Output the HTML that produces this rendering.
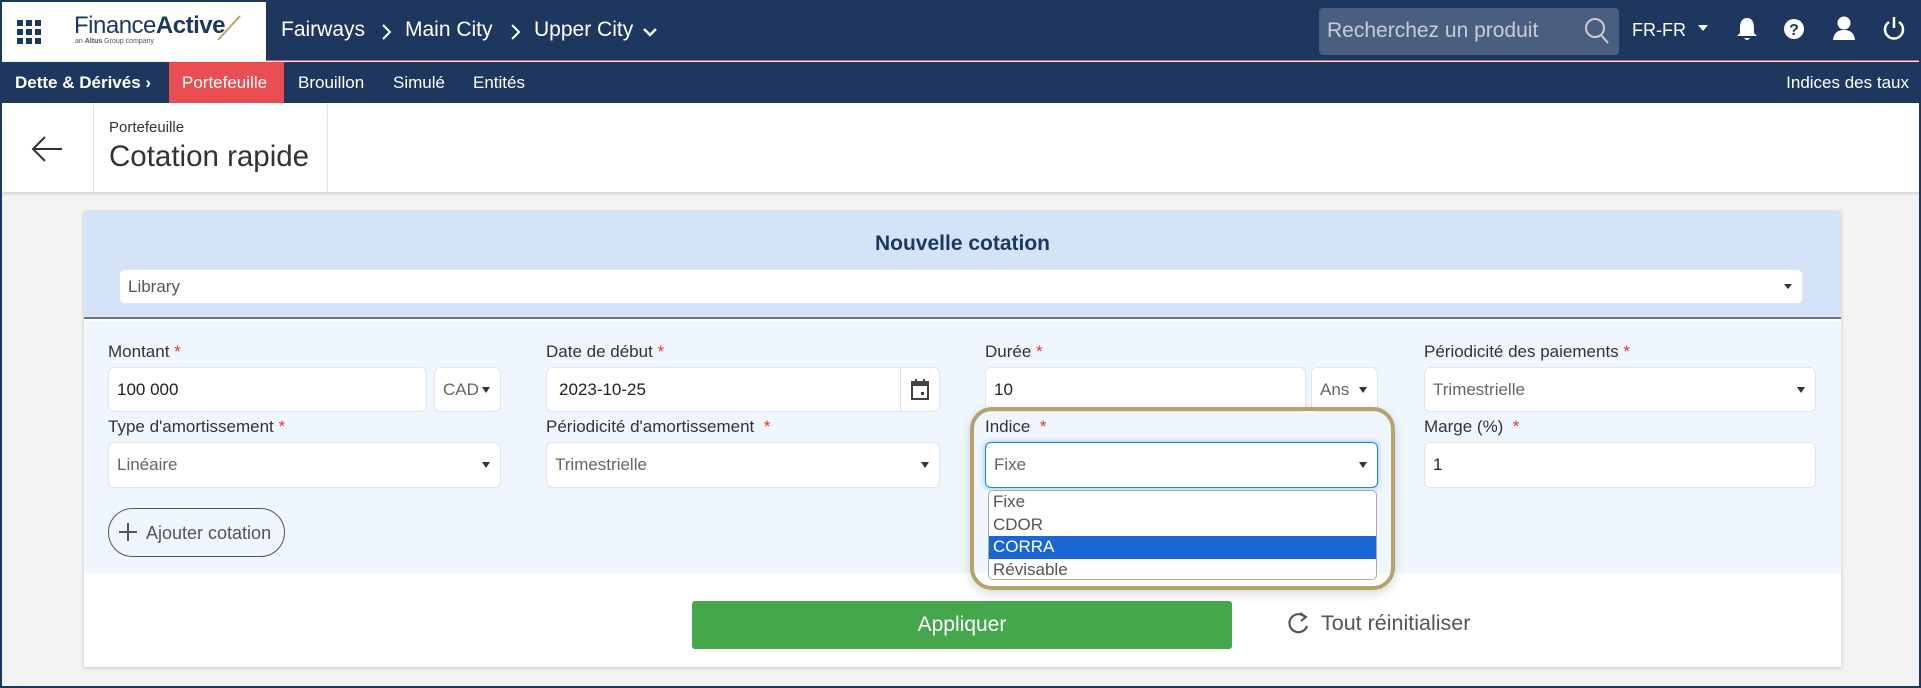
<!DOCTYPE html>
<html><head><meta charset="utf-8"><style>
*{box-sizing:border-box;margin:0;padding:0}
body{width:1921px;height:688px;overflow:hidden;background:#f3f3f3;font-family:"Liberation Sans",sans-serif;position:relative;color:#333}
.abs{position:absolute}
.top{left:0;top:0;width:1921px;height:61px;background:#1e375f;border-bottom:1px solid #e05c5c}
.sub{left:0;top:62px;width:1921px;height:41px;background:#1e375f;color:#fff;font-size:17px}
.sub span{position:absolute;top:11px}
.hdr{left:0;top:103px;width:1921px;height:89px;background:#fff;box-shadow:0 2px 3px rgba(0,0,0,.12)}
.card{left:84px;top:211px;width:1757px;height:456px;background:#fff;box-shadow:0 1px 4px rgba(0,0,0,.2)}
.lbl{font-size:17px;color:#333;white-space:nowrap}
.lbl b{color:#e33;font-weight:normal}
.inp{background:#fff;border:1px solid #e1e6ee;border-radius:6px;font-size:17px;color:#222;padding-left:8px;display:flex;align-items:center}
.sel{color:#666}
.car{position:absolute;right:10px;top:50%;margin-top:-3px;width:0;height:0;border-left:4px solid transparent;border-right:4px solid transparent;border-top:6px solid #333}
.bc{top:18px;font-size:21px;color:#fff;white-space:nowrap}
</style></head><body>
<div class="abs top"></div>
<div class="abs" style="left:2px;top:2px;width:264px;height:59px;background:#fff"></div>
<svg class="abs" style="left:17px;top:20px" width="26" height="24"><g fill="#1e375f">
<rect x="0" y="0" width="6" height="6"/><rect x="9" y="0" width="6" height="6"/><rect x="18" y="0" width="6" height="6"/>
<rect x="0" y="9" width="6" height="6"/><rect x="9" y="9" width="6" height="6"/><rect x="18" y="9" width="6" height="6"/>
<rect x="0" y="18" width="6" height="6"/><rect x="9" y="18" width="6" height="6"/><rect x="18" y="18" width="6" height="6"/></g></svg>
<div class="abs" style="left:74px;top:12px;font-size:24px;color:#1e375f;letter-spacing:-0.5px">Finance<b>Active</b></div>
<svg class="abs" style="left:216px;top:14px" width="26" height="28"><line x1="2" y1="26" x2="24" y2="2" stroke="#b5a36c" stroke-width="2"/></svg>
<div class="abs" style="left:75px;top:38px;font-size:7px;color:#555">an <b>Altus</b> Group company</div>
<div class="abs bc" style="left:281px">Fairways</div>
<svg class="abs" style="left:381px;top:23px" width="12" height="18"><path d="M2 2 L9 9 L2 16" stroke="#fff" stroke-width="2" fill="none"/></svg>
<div class="abs bc" style="left:405px">Main City</div>
<svg class="abs" style="left:510px;top:23px" width="12" height="18"><path d="M2 2 L9 9 L2 16" stroke="#fff" stroke-width="2" fill="none"/></svg>
<div class="abs bc" style="left:534px">Upper City</div>
<svg class="abs" style="left:642px;top:26px" width="16" height="12"><path d="M2 3 L8 9 L14 3" stroke="#fff" stroke-width="2.5" fill="none"/></svg>
<div class="abs" style="left:1319px;top:8px;width:300px;height:47px;background:#4a5f80;border-radius:4px"></div>
<div class="abs" style="left:1327px;top:19px;font-size:21px;color:#c8ccd4">Recherchez un produit</div>
<svg class="abs" style="left:1583px;top:16px" width="28" height="30"><circle cx="12" cy="12" r="9" stroke="#ccc" stroke-width="2" fill="none"/><line x1="18" y1="19" x2="25" y2="27" stroke="#ccc" stroke-width="2"/></svg>
<div class="abs" style="left:1632px;top:20px;font-size:18px;color:#fff">FR-FR</div>
<div class="abs" style="left:1698px;top:25px;border-left:5px solid transparent;border-right:5px solid transparent;border-top:6px solid #fff"></div>
<svg class="abs" style="left:1736px;top:16px" width="22" height="26"><path d="M11 2 C5 2 4 8 4 12 L4 17 L1 20 L21 20 L18 17 L18 12 C18 8 17 2 11 2Z M8 22 Q11 26 14 22Z" fill="#fff"/></svg>
<svg class="abs" style="left:1783px;top:18px" width="22" height="22"><circle cx="11" cy="11" r="10" fill="#fff"/><text x="11" y="17" font-size="16" font-weight="bold" text-anchor="middle" fill="#1e375f" font-family="Liberation Sans">?</text></svg>
<svg class="abs" style="left:1832px;top:15px" width="24" height="26"><circle cx="12" cy="8" r="6.5" fill="#fff"/><path d="M1 25 Q2 15 12 15 Q22 15 23 25Z" fill="#fff"/></svg>
<svg class="abs" style="left:1882px;top:15px" width="24" height="26"><path d="M7 7 A9 9 0 1 0 17 7" stroke="#fff" stroke-width="2.5" fill="none"/><line x1="12" y1="2" x2="12" y2="13" stroke="#fff" stroke-width="2.5"/></svg>

<div class="abs sub"><span style="left:15px;font-weight:bold">Dette &amp; Dérivés ›</span>
<div style="position:absolute;left:169px;top:0;width:115px;height:41px;background:#e84e52"></div>
<span style="left:182px">Portefeuille</span><span style="left:298px">Brouillon</span><span style="left:393px">Simulé</span><span style="left:473px">Entités</span>
<span style="right:12px">Indices des taux</span></div>

<div class="abs hdr"></div>
<div class="abs" style="left:93px;top:103px;width:1px;height:89px;background:#e5e5e5"></div>
<div class="abs" style="left:327px;top:103px;width:1px;height:89px;background:#e5e5e5"></div>
<svg class="abs" style="left:30px;top:134px" width="34" height="30"><path d="M32 15 H3 M15 3 L3 15 L15 27" stroke="#333" stroke-width="2" fill="none"/></svg>
<div class="abs" style="left:109px;top:119px;font-size:15px;color:#333">Portefeuille</div>
<div class="abs" style="left:109px;top:140px;font-size:29.5px;color:#333">Cotation rapide</div>

<div class="abs card"></div>
<div class="abs" style="left:84px;top:211px;width:1757px;height:108px;background:#d4e3f7;border-bottom:2px solid #6b7480"></div>
<div class="abs" style="left:84px;top:232px;width:1757px;text-align:center;font-size:21px;font-weight:bold;color:#1e375f">Nouvelle cotation</div>
<div class="abs inp sel" style="left:119px;top:269px;width:1684px;height:35px;color:#555">Library<div class="car" style="border-top-width:5px"></div></div>
<div class="abs" style="left:84px;top:321px;width:1757px;height:252px;background:#f0f6fe"></div>

<div class="abs lbl" style="left:108px;top:342px">Montant <b>*</b></div>
<div class="abs inp" style="left:108px;top:367px;width:319px;height:45px">100 000</div>
<div class="abs inp sel" style="left:434px;top:367px;width:67px;height:45px">CAD<div class="car"></div></div>
<div class="abs lbl" style="left:546px;top:342px">Date de début <b>*</b></div>
<div class="abs inp" style="left:546px;top:367px;width:394px;height:45px;padding-left:12px">2023-10-25</div>
<div class="abs" style="left:900px;top:368px;width:1px;height:43px;background:#ddd"></div>
<svg class="abs" style="left:910px;top:377px" width="20" height="24"><rect x="2" y="5" width="16" height="17" stroke="#444" stroke-width="2" fill="none"/><rect x="2" y="5" width="16" height="4" fill="#444"/><line x1="6" y1="2" x2="6" y2="7" stroke="#444" stroke-width="2"/><line x1="14" y1="2" x2="14" y2="7" stroke="#444" stroke-width="2"/><rect x="11" y="15" width="3" height="3" fill="#444"/></svg>
<div class="abs lbl" style="left:985px;top:342px">Durée <b>*</b></div>
<div class="abs inp" style="left:985px;top:367px;width:321px;height:45px">10</div>
<div class="abs inp sel" style="left:1311px;top:367px;width:67px;height:45px">Ans<div class="car"></div></div>
<div class="abs lbl" style="left:1424px;top:342px">Périodicité des paiements <b>*</b></div>
<div class="abs inp sel" style="left:1424px;top:367px;width:392px;height:45px">Trimestrielle<div class="car"></div></div>

<div class="abs lbl" style="left:108px;top:417px">Type d'amortissement <b>*</b></div>
<div class="abs inp sel" style="left:108px;top:442px;width:393px;height:46px">Linéaire<div class="car"></div></div>
<div class="abs lbl" style="left:546px;top:417px">Périodicité d'amortissement &nbsp;<b>*</b></div>
<div class="abs inp sel" style="left:546px;top:442px;width:394px;height:46px">Trimestrielle<div class="car"></div></div>
<div class="abs lbl" style="left:1424px;top:417px">Marge (%) &nbsp;<b>*</b></div>
<div class="abs inp" style="left:1424px;top:442px;width:392px;height:46px">1</div>

<div class="abs" style="left:970px;top:407px;width:425px;height:183px;border:4px solid #b5a36c;border-radius:22px;box-shadow:0 4px 10px rgba(0,0,0,.15)"></div>
<div class="abs lbl" style="left:985px;top:417px">Indice &nbsp;<b>*</b></div>
<div class="abs inp sel" style="left:985px;top:442px;width:393px;height:46px;border:1px solid #1a8ac4;box-shadow:0 0 6px rgba(26,138,196,.5)">Fixe<div class="car"></div></div>
<div class="abs" style="left:988px;top:490px;width:389px;height:90px;background:#fff;border:1px solid #aaa;border-radius:5px;font-size:17px;color:#555;line-height:22.5px;overflow:hidden">
<div style="padding-left:4px">Fixe</div><div style="padding-left:4px">CDOR</div><div style="padding-left:4px;background:#1a66d2;color:#fff">CORRA</div><div style="padding-left:4px">Révisable</div></div>

<div class="abs" style="left:108px;top:508px;width:177px;height:49px;border:1px solid #555;border-radius:25px;font-size:18px;color:#555;padding:14px 0 0 37px;white-space:nowrap">Ajouter cotation</div>
<svg class="abs" style="left:117px;top:521px" width="22" height="22"><path d="M11 2V20M2 11H20" stroke="#555" stroke-width="2"/></svg>

<div class="abs" style="left:692px;top:601px;width:540px;height:48px;background:#45a74c;border-radius:3px;color:#fff;font-size:21px;text-align:center;line-height:48px">Appliquer</div>
<svg class="abs" style="left:1287px;top:611px" width="24" height="26"><path d="M18 6 A9 9 0 1 0 20 15" stroke="#555" stroke-width="2.2" fill="none"/><path d="M13 2 L19 6 L14 10" stroke="#555" stroke-width="2" fill="none"/></svg>
<div class="abs" style="left:1321px;top:611px;font-size:21.5px;color:#555">Tout réinitialiser</div>

<div class="abs" style="left:0;top:0;width:1921px;height:688px;border:2px solid #1e375f;border-top:none;pointer-events:none"></div>
</body></html>
